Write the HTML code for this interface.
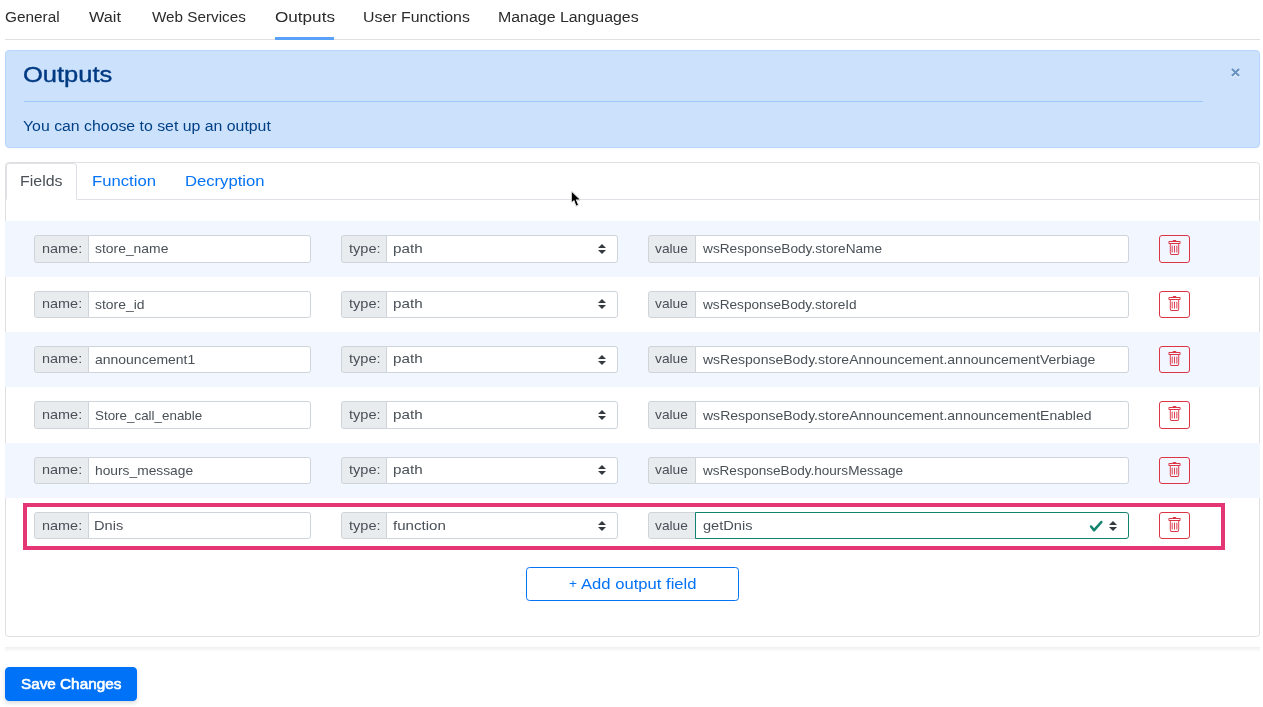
<!DOCTYPE html>
<html lang="en"><head><meta charset="utf-8"><title>Outputs</title>
<style>
*{box-sizing:border-box}
html,body{margin:0;padding:0;background:#fff}
body{width:1263px;height:707px;position:relative;overflow:hidden;
 font-family:"Liberation Sans",sans-serif;font-size:14px;color:#212529}
.t{position:absolute;white-space:nowrap;line-height:20px;height:20px;display:block;transform-origin:0 0;will-change:transform}
.navline{position:absolute;left:5px;top:39px;width:1255px;height:1px;background:#e0e0e0}
.navactive{position:absolute;left:275px;top:37px;width:59px;height:3px;background:#5aa2f8}
.alert{position:absolute;left:5px;top:50px;width:1255px;height:98px;background:#cce1fc;
 border:1px solid #b8d6fc;border-radius:4px}
.alert hr{position:absolute;left:17.5px;top:50px;width:1179.5px;height:0;margin:0;border:0;
 border-top:1px solid #9fc9fc}
.close{position:absolute;left:1223.8px;top:16.3px;display:block}
.card{position:absolute;left:5px;top:162px;width:1255px;height:475px;border:1px solid #dfdfdf;
 border-radius:3.5px;background:#fff}
.tabline{position:absolute;left:6px;top:199px;width:1253px;height:1px;background:#dee2e6}
.tab-active{position:absolute;left:6px;top:163px;width:71px;height:37px;border:1px solid #dee2e6;
 border-bottom-color:#fff;border-radius:3.5px 3.5px 0 0;background:#fff}
.orow{position:absolute;left:5px;width:1255px;height:55.375px}
.orow.striped{background:#f1f6ff}
.lbl{position:absolute;height:27.375px;background:#e9ecef;border:1px solid #ced4da;
 border-radius:2.8px 0 0 2.8px}
.ctl{position:absolute;height:27.375px;background:#fff;border:1px solid #ced4da;
 border-radius:0 2.8px 2.8px 0}
.ctl.sel{border-radius:0 3px 3px 0}
.ctl.valid{border-color:#11836f}
.arr{position:absolute;right:10.5px;top:7.7px;display:block}
.chk{position:absolute;right:24.5px;top:5.5px;display:block}
.del{position:absolute;width:31px;height:27.375px;border:1px solid #dc3545;border-radius:3px}
.trash{position:absolute;left:7px;top:4px;display:block}
.addbtn{position:absolute;left:526px;top:567px;width:213px;height:34px;border:1px solid #0573f5;
 border-radius:3.5px;background:#fff}
.hr2{position:absolute;left:5px;top:647px;width:1255px;height:5px;background:linear-gradient(#efefef,#f6f6f6 45%,#fff)}
.savebtn{position:absolute;left:5px;top:667px;width:132px;height:34px;background:#0072f7;
 border:1px solid #0072f7;border-radius:4px;box-shadow:0 2px 4px rgba(0,0,0,.15)}
.hl{position:absolute;left:23px;top:503px;width:1202px;height:47px;border:4px solid #e43575}
.cursor{position:absolute;left:568px;top:189px;display:block}
</style></head><body>
<nav class="topnav">
<div class="navline"></div><div class="navactive"></div>
<span class="t" id="nav0" style="left:5.00px;top:7.15px;font-size:14px;transform:scaleX(1.0973);color:#2b2b2b;">General</span>
<span class="t" id="nav1" style="left:89.00px;top:7.15px;font-size:14px;transform:scaleX(1.1628);color:#2b2b2b;">Wait</span>
<span class="t" id="nav2" style="left:152.00px;top:7.15px;font-size:14px;transform:scaleX(1.0898);color:#2b2b2b;">Web Services</span>
<span class="t" id="nav3" style="left:275.00px;top:7.15px;font-size:14px;transform:scaleX(1.2226);color:#2b2b2b;">Outputs</span>
<span class="t" id="nav4" style="left:363.00px;top:7.15px;font-size:14px;transform:scaleX(1.1348);color:#2b2b2b;">User Functions</span>
<span class="t" id="nav5" style="left:498.00px;top:7.15px;font-size:14px;transform:scaleX(1.1363);color:#2b2b2b;">Manage Languages</span>
</nav>
<div class="alert"><hr><svg class="close" viewBox="0 0 12 13" width="12" height="13"><path d="M1.9 2.9 L9.1 9.9 M9.1 2.9 L1.9 9.9" stroke="#fff" stroke-width="2.1" fill="none" opacity=".9"/><path d="M1.9 1.9 L9.1 8.9 M9.1 1.9 L1.9 8.9" stroke="#6693c2" stroke-width="2.1" fill="none"/></svg></div>
<span class="t" id="ah" style="left:23.00px;top:65.05px;font-size:21.5px;transform:scaleX(1.1866);color:#003a82;-webkit-text-stroke:0.38px #003a82;">Outputs</span>
<span class="t" id="at" style="left:23.00px;top:116.15px;font-size:14px;transform:scaleX(1.1317);color:#004085;">You can choose to set up an output</span>
<div class="card"></div>
<div class="tabline"></div><div class="tab-active"></div>
<span class="t" id="tab0" style="left:20.00px;top:171.15px;font-size:14px;transform:scaleX(1.1401);color:#495057;">Fields</span>
<span class="t" id="tab1" style="left:92.00px;top:171.15px;font-size:14px;transform:scaleX(1.1917);color:#0573f5;">Function</span>
<span class="t" id="tab2" style="left:185.00px;top:171.15px;font-size:14px;transform:scaleX(1.1883);color:#0573f5;">Decryption</span>
<div class="orow striped" style="top:221.190px"></div>
<div class="lbl" style="left:34px;top:235.190px;width:54.5px"></div>
<div class="ctl" style="left:87.5px;top:235.190px;width:223.25px"></div>
<div class="lbl" style="left:340.75px;top:235.190px;width:45.75px"></div>
<div class="ctl sel" style="left:385.5px;top:235.190px;width:232.25px"><svg class="arr" viewBox="0 0 4 5" width="8" height="10"><path fill="#343a40" d="M2 0L0 2h4zm0 5L0 3h4z"/></svg></div>
<div class="lbl" style="left:647.5px;top:235.190px;width:48.25px"></div>
<div class="ctl" style="left:694.75px;top:235.190px;width:434px"></div>
<div class="del" style="left:1158.75px;top:235.190px"><svg class="trash" viewBox="0 0 16 16" width="15" height="16" preserveAspectRatio="none" fill="#dc3545"><path d="M5.5 5.5A.5.5 0 0 1 6 6v6a.5.5 0 0 1-1 0V6a.5.5 0 0 1 .5-.5zm2.5 0a.5.5 0 0 1 .5.5v6a.5.5 0 0 1-1 0V6a.5.5 0 0 1 .5-.5zm3 .5a.5.5 0 0 0-1 0v6a.5.5 0 0 0 1 0V6z"/><path fill-rule="evenodd" d="M14.5 3a1 1 0 0 1-1 1H13v9a2 2 0 0 1-2 2H5a2 2 0 0 1-2-2V4h-.5a1 1 0 0 1-1-1V2a1 1 0 0 1 1-1H6a1 1 0 0 1 1-1h2a1 1 0 0 1 1 1h3.5a1 1 0 0 1 1 1v1zM4.118 4 4 4.059V13a1 1 0 0 0 1 1h6a1 1 0 0 0 1-1V4.059L11.882 4H4.118zM2.5 3V2h11v1h-11z"/></svg></div>
<span class="t" id="r0ln" style="left:42.00px;top:238.76px;font-size:12.25px;transform:scaleX(1.1795);color:#495057;">name:</span>
<span class="t" id="r0n" style="left:95.00px;top:238.76px;font-size:12.25px;transform:scaleX(1.1342);color:#495057;">store_name</span>
<span class="t" id="r0lt" style="left:349.00px;top:238.76px;font-size:12.25px;transform:scaleX(1.1873);color:#495057;">type:</span>
<span class="t" id="r0t" style="left:393.00px;top:238.76px;font-size:12.25px;transform:scaleX(1.2411);color:#495057;">path</span>
<span class="t" id="r0lv" style="left:655.00px;top:238.76px;font-size:12.25px;transform:scaleX(1.1235);color:#495057;">value</span>
<span class="t" id="r0v" style="left:703.00px;top:238.76px;font-size:12.25px;transform:scaleX(1.1163);color:#495057;">wsResponseBody.storeName</span>
<div class="orow" style="top:276.565px"></div>
<div class="lbl" style="left:34px;top:290.565px;width:54.5px"></div>
<div class="ctl" style="left:87.5px;top:290.565px;width:223.25px"></div>
<div class="lbl" style="left:340.75px;top:290.565px;width:45.75px"></div>
<div class="ctl sel" style="left:385.5px;top:290.565px;width:232.25px"><svg class="arr" viewBox="0 0 4 5" width="8" height="10"><path fill="#343a40" d="M2 0L0 2h4zm0 5L0 3h4z"/></svg></div>
<div class="lbl" style="left:647.5px;top:290.565px;width:48.25px"></div>
<div class="ctl" style="left:694.75px;top:290.565px;width:434px"></div>
<div class="del" style="left:1158.75px;top:290.565px"><svg class="trash" viewBox="0 0 16 16" width="15" height="16" preserveAspectRatio="none" fill="#dc3545"><path d="M5.5 5.5A.5.5 0 0 1 6 6v6a.5.5 0 0 1-1 0V6a.5.5 0 0 1 .5-.5zm2.5 0a.5.5 0 0 1 .5.5v6a.5.5 0 0 1-1 0V6a.5.5 0 0 1 .5-.5zm3 .5a.5.5 0 0 0-1 0v6a.5.5 0 0 0 1 0V6z"/><path fill-rule="evenodd" d="M14.5 3a1 1 0 0 1-1 1H13v9a2 2 0 0 1-2 2H5a2 2 0 0 1-2-2V4h-.5a1 1 0 0 1-1-1V2a1 1 0 0 1 1-1H6a1 1 0 0 1 1-1h2a1 1 0 0 1 1 1h3.5a1 1 0 0 1 1 1v1zM4.118 4 4 4.059V13a1 1 0 0 0 1 1h6a1 1 0 0 0 1-1V4.059L11.882 4H4.118zM2.5 3V2h11v1h-11z"/></svg></div>
<span class="t" id="r1ln" style="left:42.00px;top:293.76px;font-size:12.25px;transform:scaleX(1.1795);color:#495057;">name:</span>
<span class="t" id="r1n" style="left:95.00px;top:294.76px;font-size:12.25px;transform:scaleX(1.1346);color:#495057;">store_id</span>
<span class="t" id="r1lt" style="left:349.00px;top:293.76px;font-size:12.25px;transform:scaleX(1.1873);color:#495057;">type:</span>
<span class="t" id="r1t" style="left:393.00px;top:293.76px;font-size:12.25px;transform:scaleX(1.2411);color:#495057;">path</span>
<span class="t" id="r1lv" style="left:655.00px;top:293.76px;font-size:12.25px;transform:scaleX(1.1235);color:#495057;">value</span>
<span class="t" id="r1v" style="left:703.00px;top:294.76px;font-size:12.25px;transform:scaleX(1.1136);color:#495057;">wsResponseBody.storeId</span>
<div class="orow striped" style="top:331.940px"></div>
<div class="lbl" style="left:34px;top:345.940px;width:54.5px"></div>
<div class="ctl" style="left:87.5px;top:345.940px;width:223.25px"></div>
<div class="lbl" style="left:340.75px;top:345.940px;width:45.75px"></div>
<div class="ctl sel" style="left:385.5px;top:345.940px;width:232.25px"><svg class="arr" viewBox="0 0 4 5" width="8" height="10"><path fill="#343a40" d="M2 0L0 2h4zm0 5L0 3h4z"/></svg></div>
<div class="lbl" style="left:647.5px;top:345.940px;width:48.25px"></div>
<div class="ctl" style="left:694.75px;top:345.940px;width:434px"></div>
<div class="del" style="left:1158.75px;top:345.940px"><svg class="trash" viewBox="0 0 16 16" width="15" height="16" preserveAspectRatio="none" fill="#dc3545"><path d="M5.5 5.5A.5.5 0 0 1 6 6v6a.5.5 0 0 1-1 0V6a.5.5 0 0 1 .5-.5zm2.5 0a.5.5 0 0 1 .5.5v6a.5.5 0 0 1-1 0V6a.5.5 0 0 1 .5-.5zm3 .5a.5.5 0 0 0-1 0v6a.5.5 0 0 0 1 0V6z"/><path fill-rule="evenodd" d="M14.5 3a1 1 0 0 1-1 1H13v9a2 2 0 0 1-2 2H5a2 2 0 0 1-2-2V4h-.5a1 1 0 0 1-1-1V2a1 1 0 0 1 1-1H6a1 1 0 0 1 1-1h2a1 1 0 0 1 1 1h3.5a1 1 0 0 1 1 1v1zM4.118 4 4 4.059V13a1 1 0 0 0 1 1h6a1 1 0 0 0 1-1V4.059L11.882 4H4.118zM2.5 3V2h11v1h-11z"/></svg></div>
<span class="t" id="r2ln" style="left:42.00px;top:348.76px;font-size:12.25px;transform:scaleX(1.1795);color:#495057;">name:</span>
<span class="t" id="r2n" style="left:95.00px;top:349.76px;font-size:12.25px;transform:scaleX(1.1411);color:#495057;">announcement1</span>
<span class="t" id="r2lt" style="left:349.00px;top:348.76px;font-size:12.25px;transform:scaleX(1.1873);color:#495057;">type:</span>
<span class="t" id="r2t" style="left:393.00px;top:348.76px;font-size:12.25px;transform:scaleX(1.2411);color:#495057;">path</span>
<span class="t" id="r2lv" style="left:655.00px;top:348.76px;font-size:12.25px;transform:scaleX(1.1235);color:#495057;">value</span>
<span class="t" id="r2v" style="left:703.00px;top:349.76px;font-size:12.25px;transform:scaleX(1.1438);color:#495057;">wsResponseBody.storeAnnouncement.announcementVerbiage</span>
<div class="orow" style="top:387.315px"></div>
<div class="lbl" style="left:34px;top:401.315px;width:54.5px"></div>
<div class="ctl" style="left:87.5px;top:401.315px;width:223.25px"></div>
<div class="lbl" style="left:340.75px;top:401.315px;width:45.75px"></div>
<div class="ctl sel" style="left:385.5px;top:401.315px;width:232.25px"><svg class="arr" viewBox="0 0 4 5" width="8" height="10"><path fill="#343a40" d="M2 0L0 2h4zm0 5L0 3h4z"/></svg></div>
<div class="lbl" style="left:647.5px;top:401.315px;width:48.25px"></div>
<div class="ctl" style="left:694.75px;top:401.315px;width:434px"></div>
<div class="del" style="left:1158.75px;top:401.315px"><svg class="trash" viewBox="0 0 16 16" width="15" height="16" preserveAspectRatio="none" fill="#dc3545"><path d="M5.5 5.5A.5.5 0 0 1 6 6v6a.5.5 0 0 1-1 0V6a.5.5 0 0 1 .5-.5zm2.5 0a.5.5 0 0 1 .5.5v6a.5.5 0 0 1-1 0V6a.5.5 0 0 1 .5-.5zm3 .5a.5.5 0 0 0-1 0v6a.5.5 0 0 0 1 0V6z"/><path fill-rule="evenodd" d="M14.5 3a1 1 0 0 1-1 1H13v9a2 2 0 0 1-2 2H5a2 2 0 0 1-2-2V4h-.5a1 1 0 0 1-1-1V2a1 1 0 0 1 1-1H6a1 1 0 0 1 1-1h2a1 1 0 0 1 1 1h3.5a1 1 0 0 1 1 1v1zM4.118 4 4 4.059V13a1 1 0 0 0 1 1h6a1 1 0 0 0 1-1V4.059L11.882 4H4.118zM2.5 3V2h11v1h-11z"/></svg></div>
<span class="t" id="r3ln" style="left:42.00px;top:404.76px;font-size:12.25px;transform:scaleX(1.1795);color:#495057;">name:</span>
<span class="t" id="r3n" style="left:95.00px;top:405.76px;font-size:12.25px;transform:scaleX(1.0932);color:#495057;">Store_call_enable</span>
<span class="t" id="r3lt" style="left:349.00px;top:404.76px;font-size:12.25px;transform:scaleX(1.1873);color:#495057;">type:</span>
<span class="t" id="r3t" style="left:393.00px;top:404.76px;font-size:12.25px;transform:scaleX(1.2411);color:#495057;">path</span>
<span class="t" id="r3lv" style="left:655.00px;top:404.76px;font-size:12.25px;transform:scaleX(1.1235);color:#495057;">value</span>
<span class="t" id="r3v" style="left:703.00px;top:405.76px;font-size:12.25px;transform:scaleX(1.1439);color:#495057;">wsResponseBody.storeAnnouncement.announcementEnabled</span>
<div class="orow striped" style="top:442.690px"></div>
<div class="lbl" style="left:34px;top:456.690px;width:54.5px"></div>
<div class="ctl" style="left:87.5px;top:456.690px;width:223.25px"></div>
<div class="lbl" style="left:340.75px;top:456.690px;width:45.75px"></div>
<div class="ctl sel" style="left:385.5px;top:456.690px;width:232.25px"><svg class="arr" viewBox="0 0 4 5" width="8" height="10"><path fill="#343a40" d="M2 0L0 2h4zm0 5L0 3h4z"/></svg></div>
<div class="lbl" style="left:647.5px;top:456.690px;width:48.25px"></div>
<div class="ctl" style="left:694.75px;top:456.690px;width:434px"></div>
<div class="del" style="left:1158.75px;top:456.690px"><svg class="trash" viewBox="0 0 16 16" width="15" height="16" preserveAspectRatio="none" fill="#dc3545"><path d="M5.5 5.5A.5.5 0 0 1 6 6v6a.5.5 0 0 1-1 0V6a.5.5 0 0 1 .5-.5zm2.5 0a.5.5 0 0 1 .5.5v6a.5.5 0 0 1-1 0V6a.5.5 0 0 1 .5-.5zm3 .5a.5.5 0 0 0-1 0v6a.5.5 0 0 0 1 0V6z"/><path fill-rule="evenodd" d="M14.5 3a1 1 0 0 1-1 1H13v9a2 2 0 0 1-2 2H5a2 2 0 0 1-2-2V4h-.5a1 1 0 0 1-1-1V2a1 1 0 0 1 1-1H6a1 1 0 0 1 1-1h2a1 1 0 0 1 1 1h3.5a1 1 0 0 1 1 1v1zM4.118 4 4 4.059V13a1 1 0 0 0 1 1h6a1 1 0 0 0 1-1V4.059L11.882 4H4.118zM2.5 3V2h11v1h-11z"/></svg></div>
<span class="t" id="r4ln" style="left:42.00px;top:459.76px;font-size:12.25px;transform:scaleX(1.1795);color:#495057;">name:</span>
<span class="t" id="r4n" style="left:95.00px;top:460.76px;font-size:12.25px;transform:scaleX(1.1257);color:#495057;">hours_message</span>
<span class="t" id="r4lt" style="left:349.00px;top:459.76px;font-size:12.25px;transform:scaleX(1.1873);color:#495057;">type:</span>
<span class="t" id="r4t" style="left:393.00px;top:459.76px;font-size:12.25px;transform:scaleX(1.2411);color:#495057;">path</span>
<span class="t" id="r4lv" style="left:655.00px;top:459.76px;font-size:12.25px;transform:scaleX(1.1235);color:#495057;">value</span>
<span class="t" id="r4v" style="left:703.00px;top:460.76px;font-size:12.25px;transform:scaleX(1.1063);color:#495057;">wsResponseBody.hoursMessage</span>
<div class="orow" style="top:498.065px"></div>
<div class="lbl" style="left:34px;top:512.065px;width:54.5px"></div>
<div class="ctl" style="left:87.5px;top:512.065px;width:223.25px"></div>
<div class="lbl" style="left:340.75px;top:512.065px;width:45.75px"></div>
<div class="ctl sel" style="left:385.5px;top:512.065px;width:232.25px"><svg class="arr" viewBox="0 0 4 5" width="8" height="10"><path fill="#343a40" d="M2 0L0 2h4zm0 5L0 3h4z"/></svg></div>
<div class="lbl" style="left:647.5px;top:512.065px;width:48.25px"></div>
<div class="ctl sel valid" style="left:694.75px;top:512.065px;width:434px"><svg class="chk" viewBox="0 0 8 8" width="14.44" height="14.44"><path fill="#11836f" d="M2.3 6.73L.6 4.53c-.4-1.04.46-1.4 1.1-.8l1.1 1.4 3.4-3.8c.6-.63 1.6-.27 1.2.7l-4 4.6c-.43.5-.8.4-1.1.1z"/></svg><svg class="arr" viewBox="0 0 4 5" width="8" height="10"><path fill="#343a40" d="M2 0L0 2h4zm0 5L0 3h4z"/></svg></div>
<div class="del" style="left:1158.75px;top:512.065px"><svg class="trash" viewBox="0 0 16 16" width="15" height="16" preserveAspectRatio="none" fill="#dc3545"><path d="M5.5 5.5A.5.5 0 0 1 6 6v6a.5.5 0 0 1-1 0V6a.5.5 0 0 1 .5-.5zm2.5 0a.5.5 0 0 1 .5.5v6a.5.5 0 0 1-1 0V6a.5.5 0 0 1 .5-.5zm3 .5a.5.5 0 0 0-1 0v6a.5.5 0 0 0 1 0V6z"/><path fill-rule="evenodd" d="M14.5 3a1 1 0 0 1-1 1H13v9a2 2 0 0 1-2 2H5a2 2 0 0 1-2-2V4h-.5a1 1 0 0 1-1-1V2a1 1 0 0 1 1-1H6a1 1 0 0 1 1-1h2a1 1 0 0 1 1 1h3.5a1 1 0 0 1 1 1v1zM4.118 4 4 4.059V13a1 1 0 0 0 1 1h6a1 1 0 0 0 1-1V4.059L11.882 4H4.118zM2.5 3V2h11v1h-11z"/></svg></div>
<span class="t" id="r5ln" style="left:42.00px;top:515.76px;font-size:12.25px;transform:scaleX(1.1795);color:#495057;">name:</span>
<span class="t" id="r5n" style="left:94.00px;top:515.76px;font-size:12.25px;transform:scaleX(1.1937);color:#495057;">Dnis</span>
<span class="t" id="r5lt" style="left:349.00px;top:515.76px;font-size:12.25px;transform:scaleX(1.1873);color:#495057;">type:</span>
<span class="t" id="r5t" style="left:393.00px;top:515.76px;font-size:12.25px;transform:scaleX(1.2296);color:#495057;">function</span>
<span class="t" id="r5lv" style="left:655.00px;top:515.76px;font-size:12.25px;transform:scaleX(1.1235);color:#495057;">value</span>
<span class="t" id="r5v" style="left:703.00px;top:515.76px;font-size:12.25px;transform:scaleX(1.1922);color:#495057;">getDnis</span>
<div class="addbtn"></div>
<span class="t" id="addp" style="left:569.00px;top:574.44px;font-size:12px;transform:scaleX(1.1429);color:#0573f5;">+</span>
<span class="t" id="add" style="left:581.00px;top:574.15px;font-size:14px;transform:scaleX(1.1877);color:#0573f5;">Add output field</span>
<div class="hr2"></div>
<div class="savebtn"></div>
<span class="t" id="save" style="left:21.00px;top:674.15px;font-size:14px;transform:scaleX(1.0918);color:#ffffff;-webkit-text-stroke:0.6px #fff;">Save Changes</span>
<div class="hl"></div>
<svg class="cursor" viewBox="0 0 16 20" width="16" height="20"><path d="M3.8 3 L3.8 13 L6.2 11 L8.2 16.6 L10 15.9 L7.8 10.6 L11.6 10.6 Z" fill="#fff" stroke="#fff" stroke-width="1.7" stroke-linejoin="round" style="filter:drop-shadow(0 .6px .7px rgba(0,0,0,.45))"/><path d="M3.8 3 L3.8 13 L6.2 11 L8.2 16.6 L10 15.9 L7.8 10.6 L11.6 10.6 Z" fill="#000"/></svg>
</body></html>
